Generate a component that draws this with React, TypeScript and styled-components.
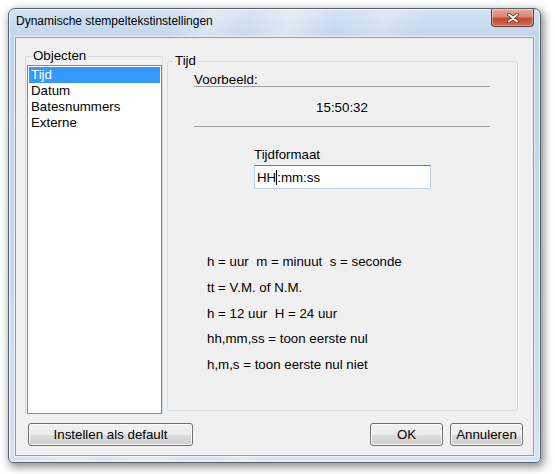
import React from "react";
import styled, { createGlobalStyle } from "styled-components";

const GlobalStyle = createGlobalStyle`
  html, body {
    margin: 0;
    padding: 0;
    background: #ffffff;
  }
  body {
    font-family: "Liberation Sans", Arial, sans-serif;
    color: #000;
  }
  * {
    box-sizing: border-box;
  }
`;

const Desktop = styled.div`
  width: 555px;
  height: 474px;
  padding: 8px 0 0 8px;
  background: #ffffff;
  overflow: hidden;
`;

const Window = styled.div`
  width: 533px;
  height: 455px;
  display: flex;
  flex-direction: column;
  padding: 0 6px 6px;
  border: 1px solid #58616c;
  border-radius: 7px 7px 5px 5px;
  background:
    linear-gradient(
      108deg,
      rgba(255, 255, 255, 0) 0%,
      rgba(255, 255, 255, 0) 24%,
      rgba(255, 255, 255, 0.35) 30%,
      rgba(255, 255, 255, 0.1) 36%,
      rgba(255, 255, 255, 0.4) 42%,
      rgba(255, 255, 255, 0) 49%,
      rgba(255, 255, 255, 0.25) 56%,
      rgba(255, 255, 255, 0) 62%,
      rgba(255, 255, 255, 0) 100%
    ),
    linear-gradient(to bottom, #d3e3f4 0%, #bfd5ed 30px, #c6dbf0 60%, #d2e4f6 100%);
  box-shadow: 2px 3px 9px 1px rgba(0, 0, 0, 0.45),
    inset 0 0 0 1px rgba(255, 255, 255, 0.7);
`;

const TitleBar = styled.div`
  height: 28px;
  display: flex;
  align-items: flex-start;
`;

const Title = styled.div`
  flex: 1;
  padding: 5px 0 0 1px;
  font-family: "Liberation Sans", Arial, sans-serif;
  font-size: 12px;
  line-height: 15px;
  color: #000;
`;

const CloseButton = styled.div`
  width: 43px;
  height: 18px;
  display: flex;
  align-items: center;
  justify-content: center;
  border: 1px solid #6b3a33;
  border-top: none;
  border-radius: 0 0 4px 4px;
  background: linear-gradient(
    to bottom,
    #e9a89a 0%,
    #dc8672 45%,
    #c64a32 55%,
    #cf6a50 100%
  );
  box-shadow: inset 0 0 0 1px rgba(255, 255, 255, 0.35);
`;

const Client = styled.div`
  flex: 1;
  display: flex;
  flex-direction: column;
  padding: 11px 10px 9px 9px;
  background: #f0f0f0;
  border: 1px solid #8c9db3;
  box-shadow: 0 0 0 1px rgba(255, 255, 255, 0.55);
  font-size: 13.3px;
`;

const MainRow = styled.div`
  flex: 1;
  min-height: 0;
  display: flex;
  gap: 4px;
`;

const Group = styled.fieldset`
  margin: 0;
  min-width: 0;
  border: 1px solid #d3dbe2;
  border-radius: 3px;
`;

const ObjectsGroup = styled(Group)`
  width: 138px;
  padding: 0 0 0 1px;
  border-bottom: none;
  border-radius: 3px 3px 0 0;
  display: flex;
  flex-direction: column;
`;

const TimeGroup = styled(Group)`
  flex: 1;
  margin: 5px 5px 3px 0;
  padding: 0;
`;

const Legend = styled.legend<{ $offset: number }>`
  margin-left: ${(p) => p.$offset}px;
  padding: 0 2px;
  line-height: 14px;
`;

const ListBox = styled.div`
  flex: 1;
  margin-top: 2px;
  padding: 1px;
  background: #ffffff;
  border: 1px solid #828790;
`;

const ListItem = styled.div<{ $selected?: boolean }>`
  height: 16px;
  line-height: 16px;
  padding-left: 2px;
  white-space: nowrap;
  background: ${(p) => (p.$selected ? "#3399ff" : "transparent")};
  color: ${(p) => (p.$selected ? "#ffffff" : "#000000")};
`;

const TimeBody = styled.div`
  display: flex;
  flex-direction: column;
  padding: 5px 27px 0 26px;
`;

const PreviewLabel = styled.div`
  line-height: 13px;
  border-bottom: 1px solid #a0a0a0;
`;

const PreviewValue = styled.div`
  padding: 14px 0 11px;
  line-height: 14px;
  text-align: center;
  border-bottom: 1px solid #a0a0a0;
`;

const FormatField = styled.div`
  width: 177px;
  margin: 21px 0 0 60px;
  display: flex;
  flex-direction: column;
  gap: 3px;
`;

const FieldLabel = styled.div`
  line-height: 14px;
`;

const TextBox = styled.div`
  height: 24px;
  display: flex;
  align-items: center;
  padding-left: 2px;
  background: #ffffff;
  border: 1px solid #b5d0e8;
  border-top-color: #4a82b4;
  white-space: pre;
`;

const Caret = styled.span`
  display: inline-block;
  width: 1px;
  height: 15px;
  background: #000;
  vertical-align: middle;
`;

const HelpList = styled.div`
  margin: 60px 0 0 13px;
`;

const HelpLine = styled.div`
  line-height: 25.8px;
  white-space: pre;
`;

const ButtonRow = styled.div`
  height: 23px;
  margin-top: 9px;
  display: flex;
  gap: 7px;
`;

const Button = styled.div<{ $width: number }>`
  width: ${(p) => p.$width}px;
  height: 23px;
  display: flex;
  align-items: center;
  justify-content: center;
  border: 1px solid #707070;
  border-radius: 3px;
  background: linear-gradient(
    to bottom,
    #f2f2f2 0%,
    #ebebeb 50%,
    #dddddd 50%,
    #cfcfcf 100%
  );
  box-shadow: inset 0 0 0 1px #fbfbfb;
  white-space: nowrap;
`;

const DefaultButton = styled(Button)`
  margin-left: 3px;
  margin-right: auto;
`;

const objects = ["Tijd", "Datum", "Batesnummers", "Externe"];

const helpLines = [
  "h = uur  m = minuut  s = seconde",
  "tt = V.M. of N.M.",
  "h = 12 uur  H = 24 uur",
  "hh,mm,ss = toon eerste nul",
  "h,m,s = toon eerste nul niet",
];

const CloseGlyph = () => (
  <svg width="12" height="10" viewBox="0 0 12 10">
    <path
      d="M2 1.5 L10 8.5 M10 1.5 L2 8.5"
      stroke="#5a2a22"
      strokeWidth="3.6"
      strokeLinecap="round"
      fill="none"
    />
    <path
      d="M2 1.5 L10 8.5 M10 1.5 L2 8.5"
      stroke="#ffffff"
      strokeWidth="2"
      strokeLinecap="round"
      fill="none"
    />
  </svg>
);

export default function App() {
  return (
    <>
      <GlobalStyle />
      <Desktop>
        <Window>
          <TitleBar>
            <Title>Dynamische stempeltekstinstellingen</Title>
            <CloseButton>
              <CloseGlyph />
            </CloseButton>
          </TitleBar>
          <Client>
            <MainRow>
              <ObjectsGroup>
                <Legend $offset={4}>Objecten</Legend>
                <ListBox>
                  {objects.map((name, i) => (
                    <ListItem key={name} $selected={i === 0}>
                      {name}
                    </ListItem>
                  ))}
                </ListBox>
              </ObjectsGroup>
              <TimeGroup>
                <Legend $offset={5}>Tijd</Legend>
                <TimeBody>
                  <PreviewLabel>Voorbeeld:</PreviewLabel>
                  <PreviewValue>15:50:32</PreviewValue>
                  <FormatField>
                    <FieldLabel>Tijdformaat</FieldLabel>
                    <TextBox>
                      HH<Caret />:mm:ss
                    </TextBox>
                  </FormatField>
                  <HelpList>
                    {helpLines.map((line) => (
                      <HelpLine key={line}>{line}</HelpLine>
                    ))}
                  </HelpList>
                </TimeBody>
              </TimeGroup>
            </MainRow>
            <ButtonRow>
              <DefaultButton $width={165}>Instellen als default</DefaultButton>
              <Button $width={73}>OK</Button>
              <Button $width={73}>Annuleren</Button>
            </ButtonRow>
          </Client>
        </Window>
      </Desktop>
    </>
  );
}
